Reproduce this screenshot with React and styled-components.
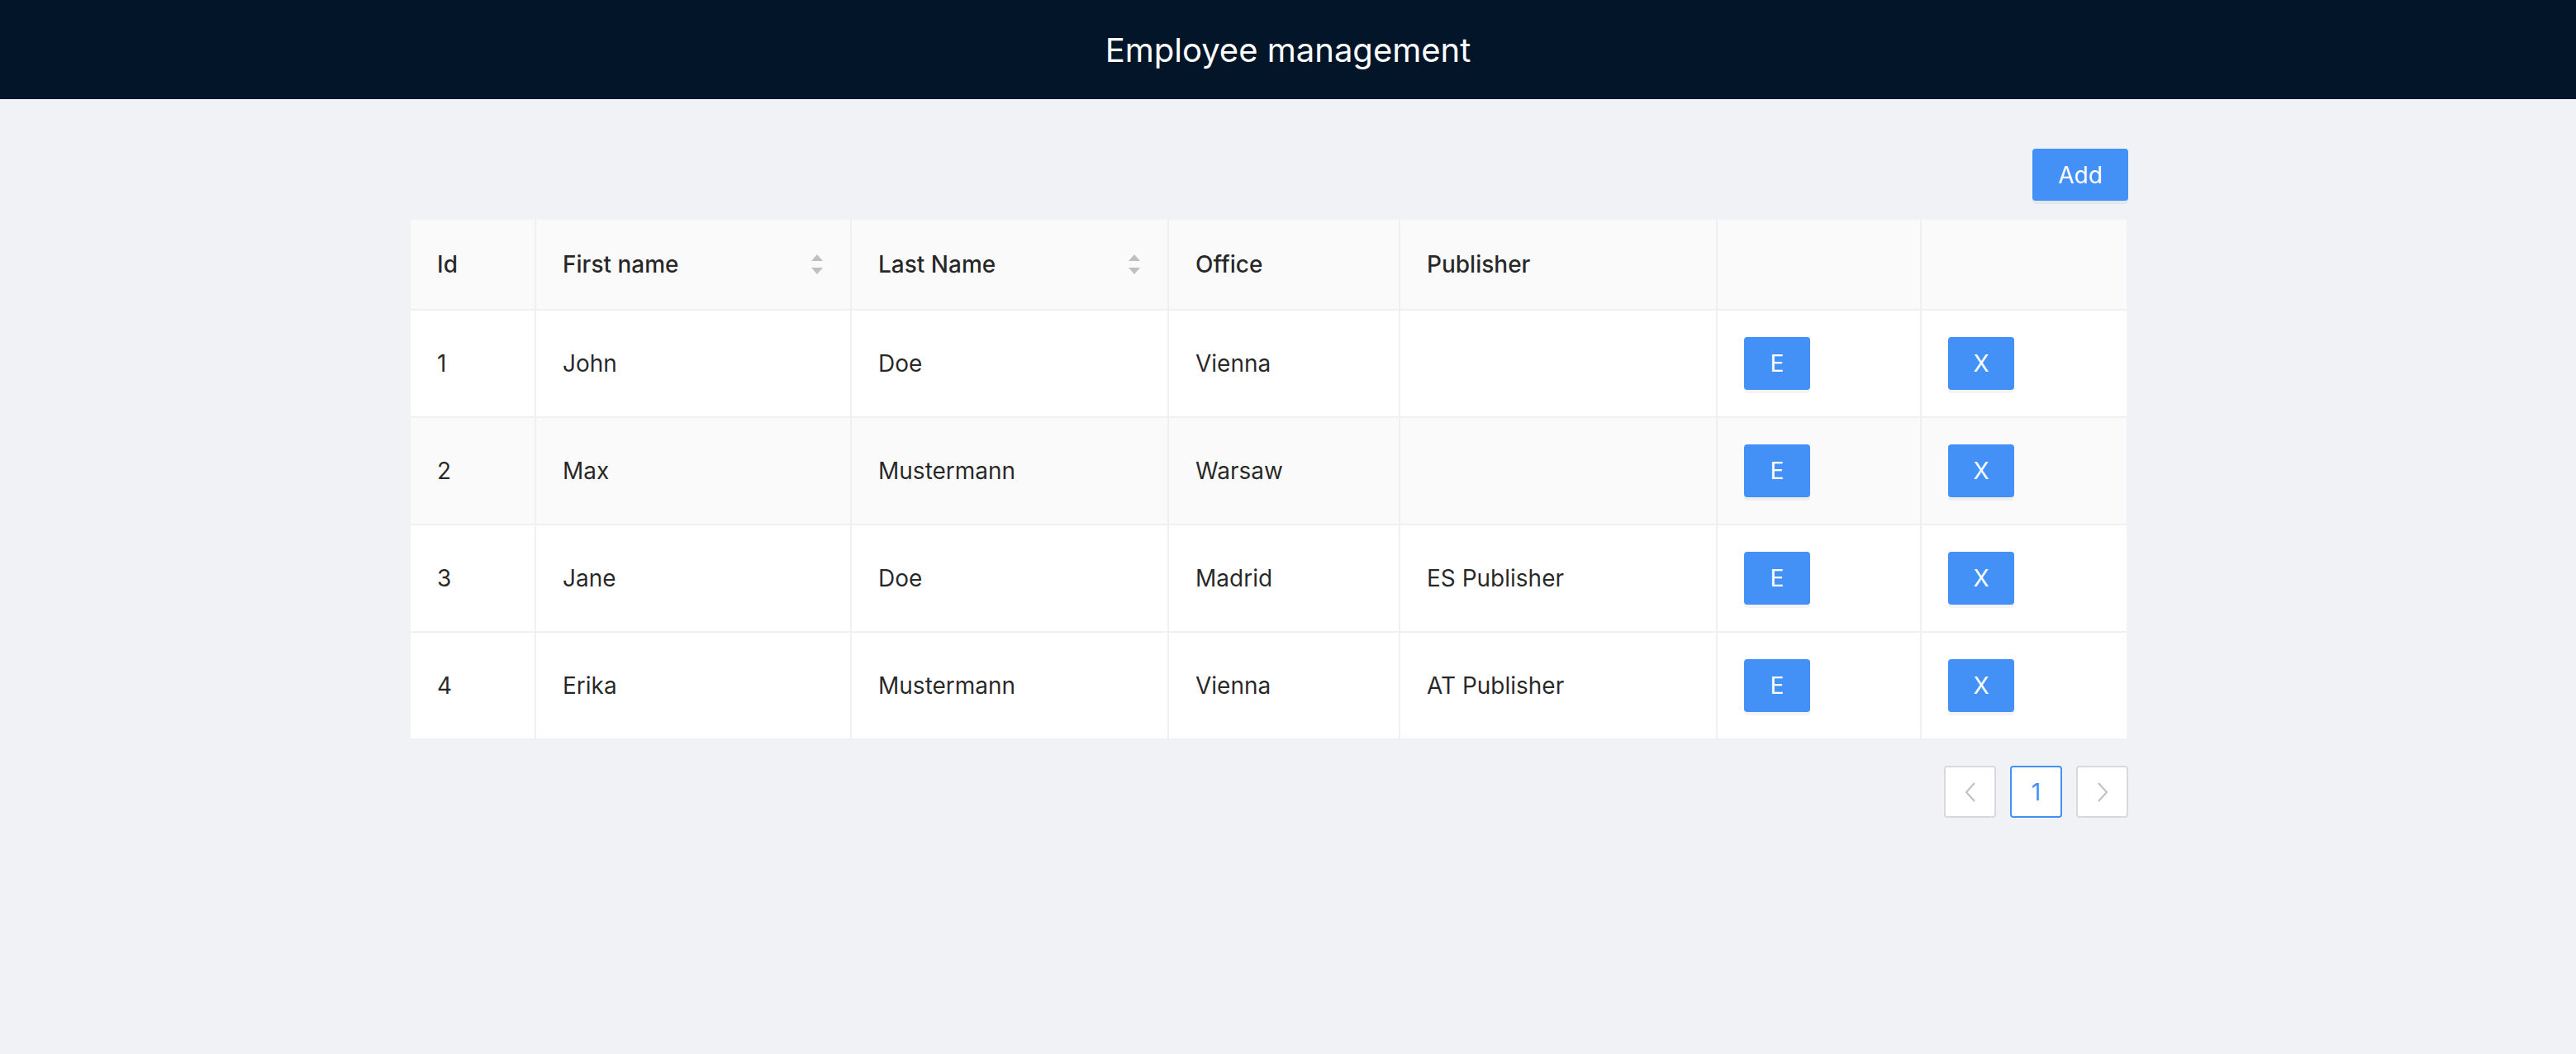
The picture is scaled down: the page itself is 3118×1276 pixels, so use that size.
import React from "react";
import styled, { createGlobalStyle } from "styled-components";

const Global = createGlobalStyle`
  html, body { margin: 0; padding: 0; }
  body {
    background: #f0f2f5;
    font-family: Inter, "Noto Sans", "Liberation Sans", sans-serif;
    color: rgba(0,0,0,0.85);
  }
`;

const Page = styled.div`
  min-height: 1276px;
  background: #f0f2f5;
`;

const Header = styled.header`
  height: 120px;
  background: #021529;
  display: flex;
  align-items: center;
  justify-content: center;
  color: #fff;
  font-size: 40px;
  font-weight: 400;
`;

const Content = styled.main`
  width: 2079px;
  margin-left: 497px;
  padding-top: 60px;
  display: flex;
  flex-direction: column;
`;

const Toolbar = styled.div`
  display: flex;
  justify-content: flex-end;
  margin-bottom: 23px;
`;

const Button = styled.button`
  font-family: inherit;
  background: #4391f6;
  color: #fff;
  border: none;
  border-radius: 4px;
  height: ${(p) => (p.$large ? 63 : 64)}px;
  min-width: ${(p) => p.$w}px;
  padding: 0;
  font-size: 28px;
  box-shadow: 0 4px 0 rgba(0, 0, 0, 0.045);
  cursor: pointer;
  display: inline-flex;
  align-items: center;
  justify-content: center;
`;

const Table = styled.table`
  width: 2077px;
  border-collapse: collapse;
  table-layout: fixed;
  background: #fff;
  font-size: 28px;
`;

const HeadCell = styled.th`
  background: #fafafa;
  text-align: left;
  font-weight: 500;
  height: 108px;
  padding: 0 32px;
  border-right: 2px solid #f0f0f0;
  border-bottom: 2px solid #f0f0f0;
  &:last-child { border-right: none; }
`;

const HeadInner = styled.div`
  display: flex;
  align-items: center;
  justify-content: space-between;
`;

const Row = styled.tr`
  background: ${(p) => (p.$alt ? "#fafafa" : "#fff")};
  &:last-child td { border-bottom: none; }
`;

const Cell = styled.td`
  height: 128px;
  padding: 0 32px;
  border-right: 2px solid #f0f0f0;
  border-bottom: 2px solid #f0f0f0;
  &:last-child { border-right: none; }
`;

const Pager = styled.div`
  display: flex;
  justify-content: flex-end;
  gap: 17px;
  margin-top: 33px;
`;

const PageItem = styled.div`
  width: 63px;
  height: 63px;
  box-sizing: border-box;
  border: 2px solid ${(p) => (p.$active ? "#4391f6" : "#d9d9d9")};
  border-radius: 4px;
  background: #fff;
  color: ${(p) => (p.$active ? "#4391f6" : "#bfbfbf")};
  display: flex;
  align-items: center;
  justify-content: center;
  font-size: 28px;
`;

const SortIcon = () => (
  <svg width="16" height="28" viewBox="0 0 16 28">
    <path d="M8 2 L15 10 L1 10 Z" fill="#bfbfbf" />
    <path d="M8 26 L15 18 L1 18 Z" fill="#bfbfbf" />
  </svg>
);

const Chevron = ({ dir }) => (
  <svg width="14" height="26" viewBox="0 0 14 26">
    <path
      d={dir === "left" ? "M12 2 L2 13 L12 24" : "M2 2 L12 13 L2 24"}
      stroke="#bfbfbf"
      strokeWidth="2"
      fill="none"
    />
  </svg>
);

const columns = [
  { title: "Id", width: 151 },
  { title: "First name", width: 382, sort: true },
  { title: "Last Name", width: 384, sort: true },
  { title: "Office", width: 280 },
  { title: "Publisher", width: 384 },
  { title: "", width: 247 },
  { title: "" },
];

const data = [
  [1, "John", "Doe", "Vienna", ""],
  [2, "Max", "Mustermann", "Warsaw", ""],
  [3, "Jane", "Doe", "Madrid", "ES Publisher"],
  [4, "Erika", "Mustermann", "Vienna", "AT Publisher"],
];

export default function App() {
  return (
    <Page>
      <Global />
      <Header>Employee management</Header>
      <Content>
        <Toolbar>
          <Button $w={116} $large>Add</Button>
        </Toolbar>
        <Table>
          <colgroup>
            {columns.map((c, i) => (
              <col key={i} style={c.width ? { width: c.width } : undefined} />
            ))}
          </colgroup>
          <thead>
            <tr>
              {columns.map((c, i) => (
                <HeadCell key={i}>
                  <HeadInner>
                    <span>{c.title}</span>
                    {c.sort && <SortIcon />}
                  </HeadInner>
                </HeadCell>
              ))}
            </tr>
          </thead>
          <tbody>
            {data.map((r, i) => (
              <Row key={r[0]} $alt={i === 1}>
                {r.map((v, j) => (
                  <Cell key={j}>{v}</Cell>
                ))}
                <Cell>
                  <Button $w={80}>E</Button>
                </Cell>
                <Cell>
                  <Button $w={80}>X</Button>
                </Cell>
              </Row>
            ))}
          </tbody>
        </Table>
        <Pager>
          <PageItem><Chevron dir="left" /></PageItem>
          <PageItem $active>1</PageItem>
          <PageItem><Chevron dir="right" /></PageItem>
        </Pager>
      </Content>
    </Page>
  );
}
